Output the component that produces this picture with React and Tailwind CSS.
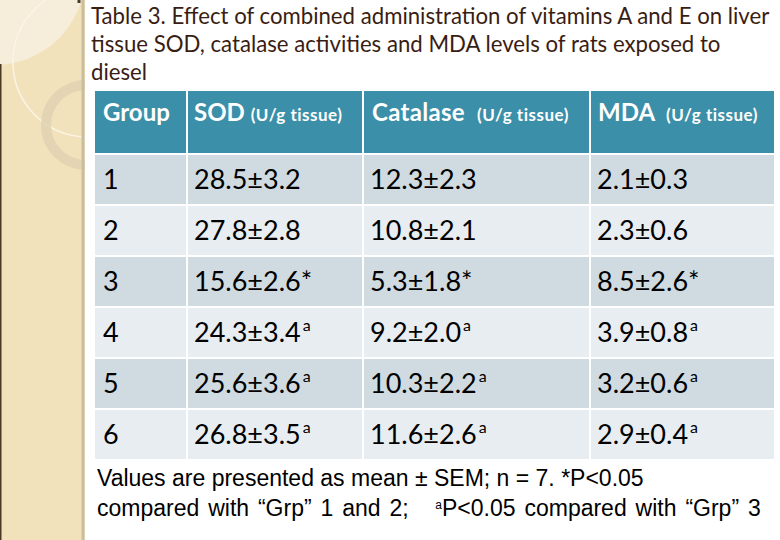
import React from "react";

const rows = [
  ["1", ["28.5±3.2", ""], ["12.3±2.3", ""], ["2.1±0.3", ""]],
  ["2", ["27.8±2.8", ""], ["10.8±2.1", ""], ["2.3±0.6", ""]],
  ["3", ["15.6±2.6*", ""], ["5.3±1.8*", ""], ["8.5±2.6*", ""]],
  ["4", ["24.3±3.4", "a"], ["9.2±2.0", "a"], ["3.9±0.8", "a"]],
  ["5", ["25.6±3.6", "a"], ["10.3±2.2", "a"], ["3.2±0.6", "a"]],
  ["6", ["26.8±3.5", "a"], ["11.6±2.6", "a"], ["2.9±0.4", "a"]],
];

function Cell({ v, bg }) {
  return (
    <div className={`${bg} flex items-center pl-[6px] text-[27px] text-black`}>
      <span>{v[0]}</span>
      {v[1] && <span className="text-[16px] ml-[2px] relative top-[-8px]">{v[1]}</span>}
    </div>
  );
}

export default function App() {
  return (
    <div className="w-[780px] h-[540px] bg-white flex overflow-hidden" style={{ fontFamily: "Lato, 'Open Sans', sans-serif" }}>
      <div className="w-[85px] h-full relative bg-[#f1e2bb] shrink-0">
        <svg width="85" height="540" className="absolute left-0 top-0">
          <circle cx="-5" cy="-25" r="90" fill="#f6eddb" />
          <circle cx="88" cy="62" r="75" fill="none" stroke="#fbf5e6" strokeWidth="1.5" />
          <circle cx="86" cy="125" r="40" fill="none" stroke="#e0d2b2" strokeWidth="10" opacity="0.85" />
          <line x1="0.5" y1="64" x2="0.5" y2="540" stroke="#4a3a24" strokeWidth="2" />
          <line x1="83" y1="0" x2="83" y2="540" stroke="#c9bea0" strokeWidth="3" />
          <line x1="79" y1="0" x2="79" y2="3" stroke="#4a3a24" strokeWidth="3" />
        </svg>
      </div>
      <div className="flex flex-col pl-[6px] pt-[2px]">
        <div className="text-[#3a1d12] text-[22.2px] leading-[28px] whitespace-nowrap">
          Table 3. Effect of combined administration of vitamins A and E on liver
          <br />
          tissue SOD, catalase activities and MDA levels of rats exposed to
          <br />
          diesel
        </div>
        <div className="mt-[5px] ml-[4px] w-[679px] grid grid-cols-[91px_174px_225px_183px] grid-rows-[62px_repeat(6,49px)] gap-[2px] bg-white">
          <div className="bg-[#3c8fa8] text-white font-bold text-[24px] pl-[8px] pt-[3px]">Group</div>
          <div className="bg-[#3c8fa8] text-white font-bold text-[24px] pl-[6px] pt-[3px] whitespace-nowrap">SOD <span className="text-[17px] tracking-[0.5px]">(U/g tissue)</span></div>
          <div className="bg-[#3c8fa8] text-white font-bold text-[24px] pl-[8px] pt-[3px] whitespace-nowrap tracking-[0.3px]">Catalase <span className="text-[17px] ml-[6px] tracking-[0.5px]">(U/g tissue)</span></div>
          <div className="bg-[#3c8fa8] text-white font-bold text-[24px] pl-[7px] pt-[3px] whitespace-nowrap">MDA <span className="text-[17px] ml-[6px] tracking-[0.5px]">(U/g tissue)</span></div>
          {rows.map((r, i) => {
            const bg = i % 2 === 0 ? "bg-[#cfdbe1]" : "bg-[#e8edf1]";
            return (
              <React.Fragment key={i}>
                <div className={`${bg} flex items-center pl-[8px] text-[27px] text-black`}>{r[0]}</div>
                <Cell v={r[1]} bg={bg} />
                <Cell v={r[2]} bg={bg} />
                <Cell v={r[3]} bg={bg} />
              </React.Fragment>
            );
          })}
        </div>
        <div className="mt-[4px] ml-[6px] text-[23px] leading-[30px] text-black whitespace-nowrap" style={{ fontFamily: "'Liberation Sans', Arial, sans-serif" }}>
          <div>Values are presented as mean ± SEM; n = 7. *P&lt;0.05</div>
          <div className="[word-spacing:2.5px]">compared with “Grp” 1 and 2;&nbsp;&nbsp; <span className="text-[12px] relative top-[-7px]">a</span>P&lt;0.05 compared with “Grp” 3</div>
        </div>
      </div>
    </div>
  );
}
